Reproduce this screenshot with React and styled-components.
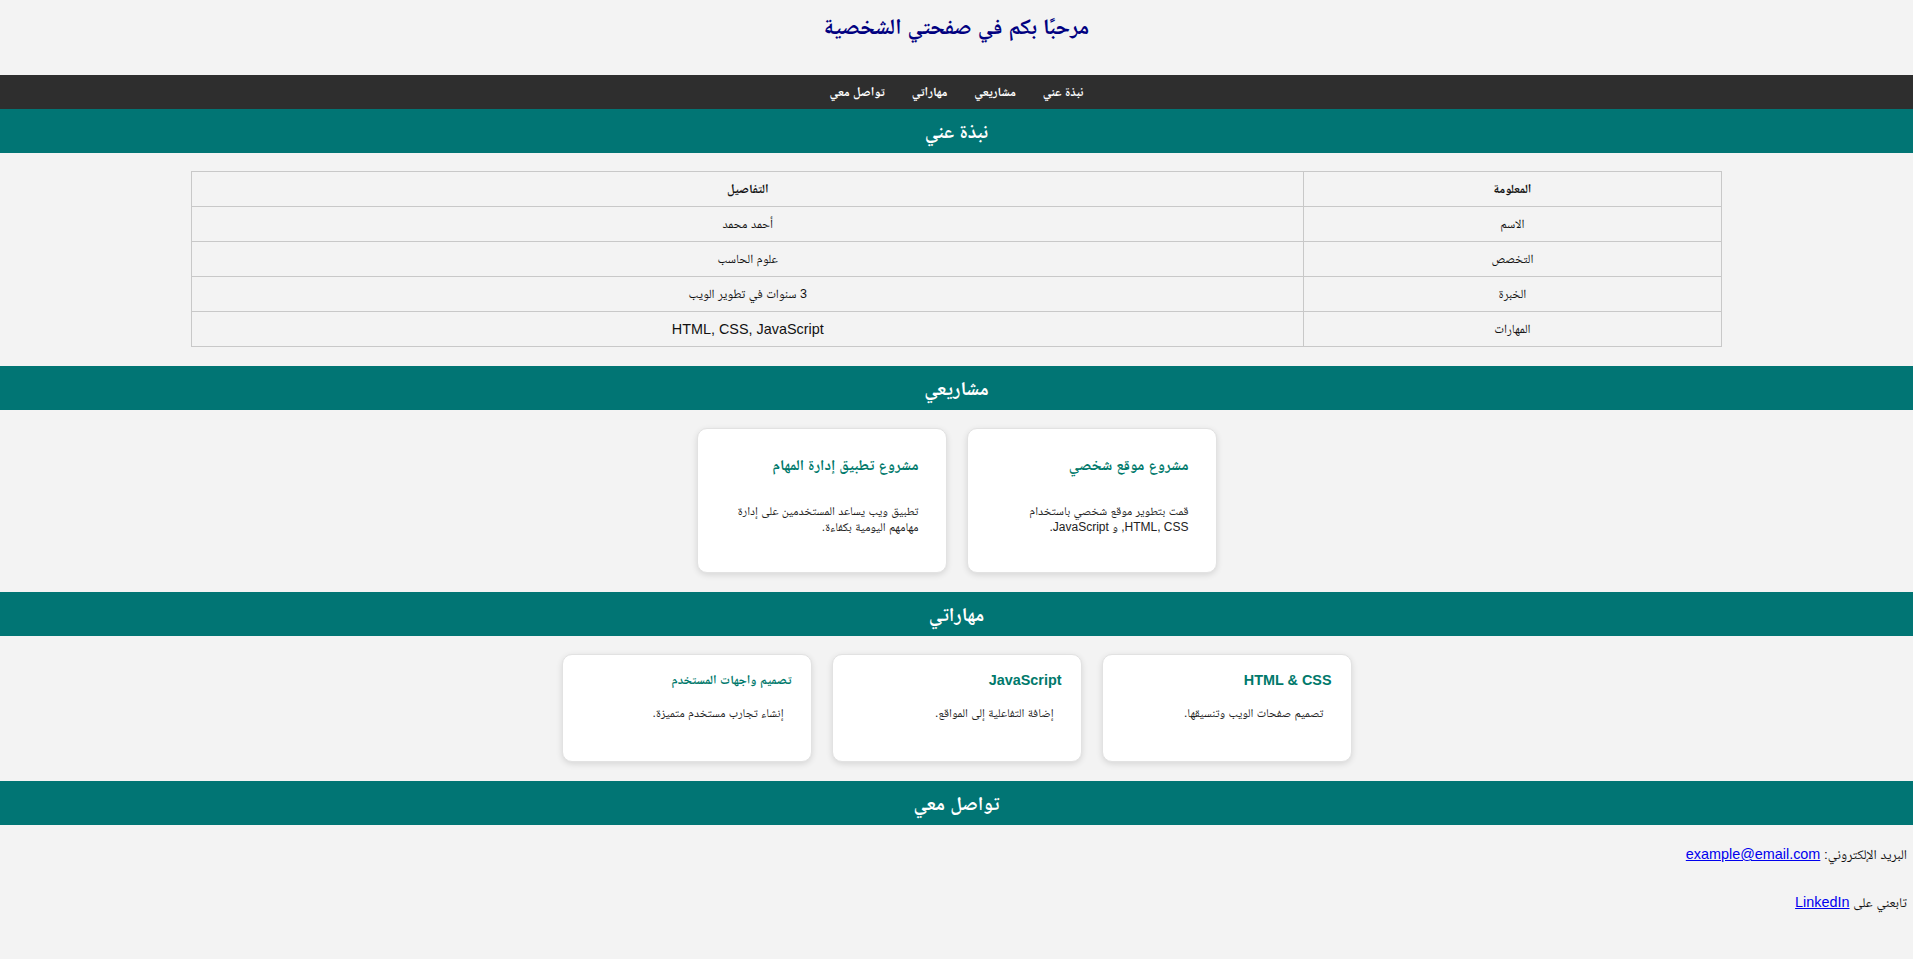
import React from "react";
import styled, { createGlobalStyle } from "styled-components";

const GlobalStyle = createGlobalStyle`
  html {
    direction: rtl;
  }
  body {
    margin: 0;
    background: #f3f3f3;
    color: #111;
    font-family: "Liberation Sans", Arial, "Noto Naskh Arabic", "Noto Sans Arabic", "DejaVu Sans", sans-serif;
    font-size: 14.4px;
  }
`;

const info = [
  { label: "الاسم", value: "أحمد محمد" },
  { label: "التخصص", value: "علوم الحاسب" },
  { label: "الخبرة", value: "3 سنوات في تطوير الويب" },
  { label: "المهارات", value: "HTML, CSS, JavaScript", latin: true },
];

const projects = [
  {
    title: "مشروع موقع شخصي",
    text: "قمت بتطوير موقع شخصي باستخدام HTML, CSS, و JavaScript.",
  },
  {
    title: "مشروع تطبيق إدارة المهام",
    text: "تطبيق ويب يساعد المستخدمين على إدارة مهامهم اليومية بكفاءة.",
  },
];

const skills = [
  { title: "HTML & CSS", text: "تصميم صفحات الويب وتنسيقها.", latin: true },
  { title: "JavaScript", text: "إضافة التفاعلية إلى المواقع.", latin: true },
  { title: "تصميم واجهات المستخدم", text: "إنشاء تجارب مستخدم متميزة." },
];

const navItems = ["نبذة عني", "مشاريعي", "مهاراتي", "تواصل معي"];

const App = () => {
  return (
    <>
      <GlobalStyle />
      <Header>
        <Title>مرحبًا بكم في صفحتي الشخصية</Title>
      </Header>
      <Nav>
        {navItems.map((item) => (
          <NavLink key={item} href="#">
            {item}
          </NavLink>
        ))}
      </Nav>

      <SectionTitle>نبذة عني</SectionTitle>
      <TableWrap>
        <InfoTable>
          <thead>
            <tr>
              <HeadCell $first>المعلومة</HeadCell>
              <HeadCell>التفاصيل</HeadCell>
            </tr>
          </thead>
          <tbody>
            {info.map((row) => (
              <tr key={row.label}>
                <Cell>{row.label}</Cell>
                <Cell $latin={row.latin}>{row.value}</Cell>
              </tr>
            ))}
          </tbody>
        </InfoTable>
      </TableWrap>

      <SectionTitle>مشاريعي</SectionTitle>
      <CardRow>
        {projects.map((p) => (
          <Card key={p.title} $kind="project">
            <CardTitle $kind="project">{p.title}</CardTitle>
            <CardText $kind="project">{p.text}</CardText>
          </Card>
        ))}
      </CardRow>

      <SectionTitle>مهاراتي</SectionTitle>
      <CardRow>
        {skills.map((s) => (
          <Card key={s.title} $kind="skill">
            <CardTitle $kind="skill" $latin={s.latin}>
              {s.title}
            </CardTitle>
            <CardText $kind="skill">{s.text}</CardText>
          </Card>
        ))}
      </CardRow>

      <SectionTitle>تواصل معي</SectionTitle>
      <Contact>
        <ContactLine>
          البريد الإلكتروني: <TextLink href="#">example@email.com</TextLink>
        </ContactLine>
        <ContactLine>
          تابعني على <TextLink href="#">LinkedIn</TextLink>
        </ContactLine>
      </Contact>
    </>
  );
};

const Header = styled.header`
  height: 75px;
  box-sizing: border-box;
  padding-top: 10px;
  text-align: center;
`;

const Title = styled.h1`
  margin: 0;
  font-size: 22px;
  line-height: 34px;
  color: #000080;
`;

const Nav = styled.nav`
  height: 34px;
  background: #2e2e2e;
  display: flex;
  justify-content: center;
  align-items: center;
`;

const NavLink = styled.a`
  color: #fff;
  font-weight: bold;
  font-size: 12.5px;
  line-height: 18px;
  text-decoration: none;
  margin: 0 13.5px;
`;

const SectionTitle = styled.h2`
  margin: 0;
  padding: 10px;
  background: #017574;
  color: #fff;
  font-size: 19.5px;
  line-height: 24px;
  text-align: center;
`;

const TableWrap = styled.div`
  padding: 18px 0 19px;
`;

const InfoTable = styled.table`
  width: 80%;
  margin: 0 auto;
  border-collapse: collapse;
`;

const HeadCell = styled.th`
  width: ${(p) => (p.$first ? "27.3%" : "auto")};
  border: 1px solid #c8c8c8;
  padding: 8px;
  font-size: 12.5px;
  line-height: 18px;
  text-align: center;
`;

const Cell = styled.td`
  border: 1px solid #c8c8c8;
  padding: 8px;
  font-size: ${(p) => (p.$latin ? "14.4px" : "12.5px")};
  line-height: 18px;
  text-align: center;
`;

const CardRow = styled.div`
  display: flex;
  justify-content: center;
  gap: 20px;
  padding: 18px 0 19px;
`;

const Card = styled.div`
  width: 250px;
  height: ${(p) => (p.$kind === "project" ? "145px" : "108px")};
  box-sizing: border-box;
  padding: ${(p) => (p.$kind === "project" ? "25px 27px" : "15px 19px")};
  background: #fff;
  border: 1px solid #e2e2e2;
  border-radius: 10px;
  box-shadow: 0 2px 6px rgba(0, 0, 0, 0.12);
`;

const CardTitle = styled.h3`
  margin: 0;
  color: #00796b;
  white-space: nowrap;
  font-size: ${(p) =>
    p.$kind === "project" ? "15px" : p.$latin ? "14.4px" : "12.5px"};
  line-height: ${(p) => (p.$kind === "project" ? "22px" : "20px")};
`;

const CardText = styled.p`
  margin: ${(p) => (p.$kind === "project" ? "27px 0 0" : "15px 0 0")};
  padding-right: ${(p) => (p.$kind === "skill" ? "8px" : "0")};
  color: #222;
  font-size: 12px;
  line-height: 16px;
`;

const Contact = styled.div`
  display: flex;
  flex-direction: column;
  gap: 31px;
  padding: 21px 6px 40px;
`;

const ContactLine = styled.p`
  margin: 0;
  font-size: 13.5px;
  line-height: 17px;
`;

const TextLink = styled.a`
  color: #0000ee;
  font-size: 14.4px;
`;

export default App;
